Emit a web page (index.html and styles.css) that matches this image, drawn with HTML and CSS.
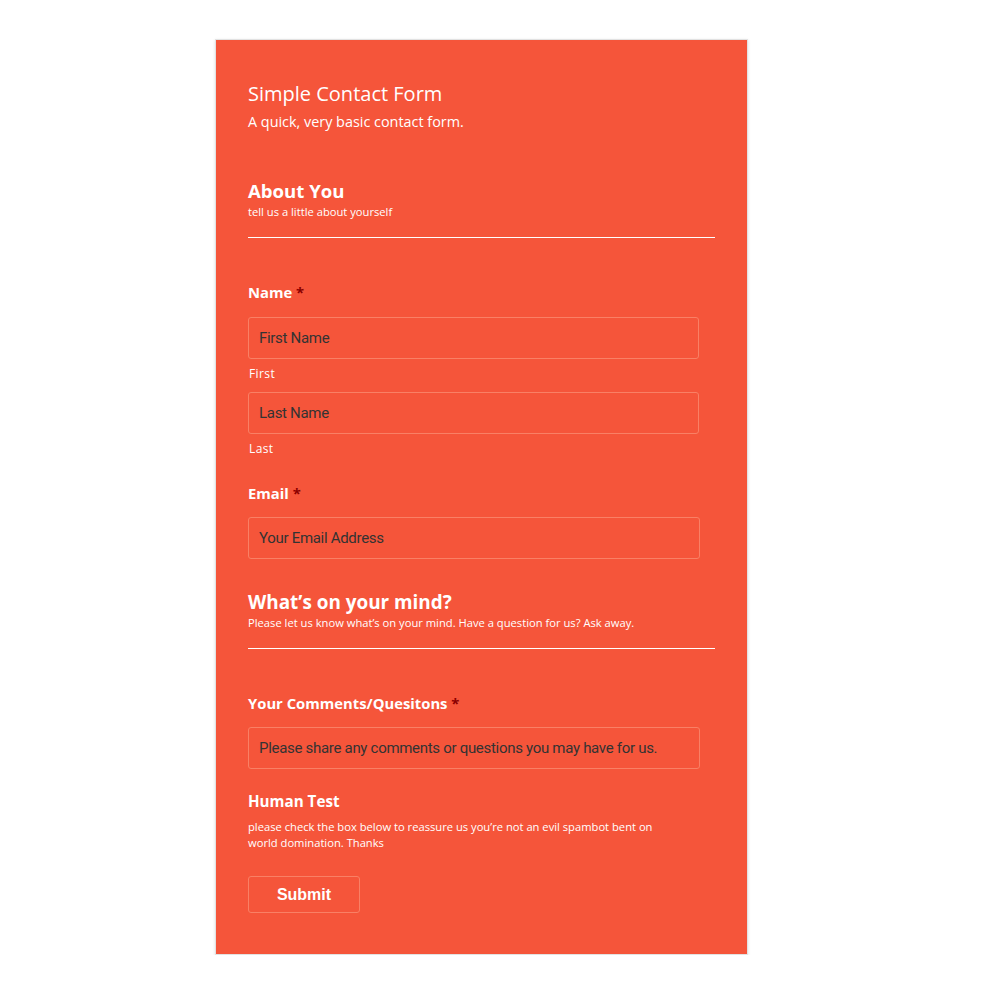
FILE: index.html
```html
<!DOCTYPE html>
<html>
<head>
<meta charset="utf-8">
<link rel="stylesheet" href="styles.css">
</head>
<body>
<div class="card">
  <header class="form-head">
    <h1 class="form-title">Simple Contact Form</h1>
    <p class="form-desc">A quick, very basic contact form.</p>
  </header>

  <section class="section">
    <h2 class="section-title">About You</h2>
    <p class="section-desc">tell us a little about yourself</p>
  </section>

  <div class="field name-field">
    <div class="label">Name <span class="req">*</span></div>
    <div class="input">First Name</div>
    <div class="sublabel">First</div>
    <div class="input">Last Name</div>
    <div class="sublabel">Last</div>
  </div>

  <div class="field email-field">
    <div class="label">Email <span class="req">*</span></div>
    <div class="input wide">Your Email Address</div>
  </div>

  <section class="section section2">
    <h2 class="section-title">What’s on your mind?</h2>
    <p class="section-desc">Please let us know what’s on your mind. Have a question for us? Ask away.</p>
  </section>

  <div class="field comments-field">
    <div class="label">Your Comments/Quesitons <span class="req">*</span></div>
    <div class="input wide">Please share any comments or questions you may have for us.</div>
  </div>

  <div class="field human-field">
    <div class="label">Human Test</div>
    <p class="human-desc">please check the box below to reassure us you’re not an evil spambot bent on<br>world domination. Thanks</p>
  </div>

  <button class="submit">Submit</button>
</div>
</body>
</html>
```
FILE: styles.css
```css
html, body {
  margin: 0;
  padding: 0;
  background: #ffffff;
}
body {
  padding-top: 39px;
  font-family: "Open Sans", "DejaVu Sans", sans-serif;
  color: #ffffff;
}
.card {
  box-sizing: border-box;
  width: 533px;
  margin-left: 215px;
  background: #f5553a;
  border: 1px solid #e2e2e2;
  box-shadow: 0 1px 3px rgba(0,0,0,0.12);
  padding: 40px 32px 41px 32px;
  display: flex;
  flex-direction: column;
  align-items: flex-start;
}
.form-head { margin: 0; }
.form-title {
  margin: 0;
  font-size: 20px;
  font-weight: 400;
  line-height: 28px;
}
.form-desc {
  margin: 0;
  font-size: 14.4px;
  line-height: 20px;
  margin-top: 4px;
}
.section {
  align-self: stretch;
  margin-top: 47px;
  border-bottom: 1px solid #ffffff;
  padding-bottom: 16px;
}
.section-title {
  margin: 0;
  font-size: 18.6px;
  font-weight: 700;
  line-height: 24px;
}
.section2 .section-title { font-size: 18.9px; }
.section-desc {
  margin: 0;
  font-size: 11.2px;
  line-height: 18px;
}
.field {
  display: flex;
  flex-direction: column;
  align-items: flex-start;
}
.name-field { margin-top: 44px; }
.email-field { margin-top: 26px; }
.section2 { margin-top: 31px; }
.comments-field { margin-top: 44px; }
.human-field { margin-top: 22px; }
.label {
  font-size: 14.8px;
  font-weight: 700;
  line-height: 20px;
}
.human-field .label { font-size: 15.2px; }
.req { color: #8b0000; }
.input {
  box-sizing: border-box;
  margin-top: 15px;
  width: 451px;
  height: 42px;
  border: 1px solid #f98065;
  border-radius: 3px;
  padding: 0 10px;
  display: flex;
  align-items: center;
  font-family: Roboto, "Liberation Sans", sans-serif;
  font-size: 15px;
  color: #333333;
  letter-spacing: -0.3px;
}
.input.wide { width: 452px; margin-top: 14px; }
.field .sublabel + .input { margin-top: 10px; }
.sublabel {
  font-size: 12px;
  line-height: 16px;
  margin-top: 7px;
  letter-spacing: 0.4px;
  padding-left: 1px;
}
.human-desc {
  margin: 8px 0 0 0;
  font-size: 11.2px;
  line-height: 16px;
}
.submit {
  margin-top: 25px;
  box-sizing: border-box;
  width: 112px;
  height: 37px;
  background: transparent;
  border: 1px solid #f98065;
  border-radius: 3px;
  color: #ffffff;
  font-family: "Liberation Sans", Arial, sans-serif;
  font-weight: 700;
  font-size: 16px;
  padding: 0;
}
```
